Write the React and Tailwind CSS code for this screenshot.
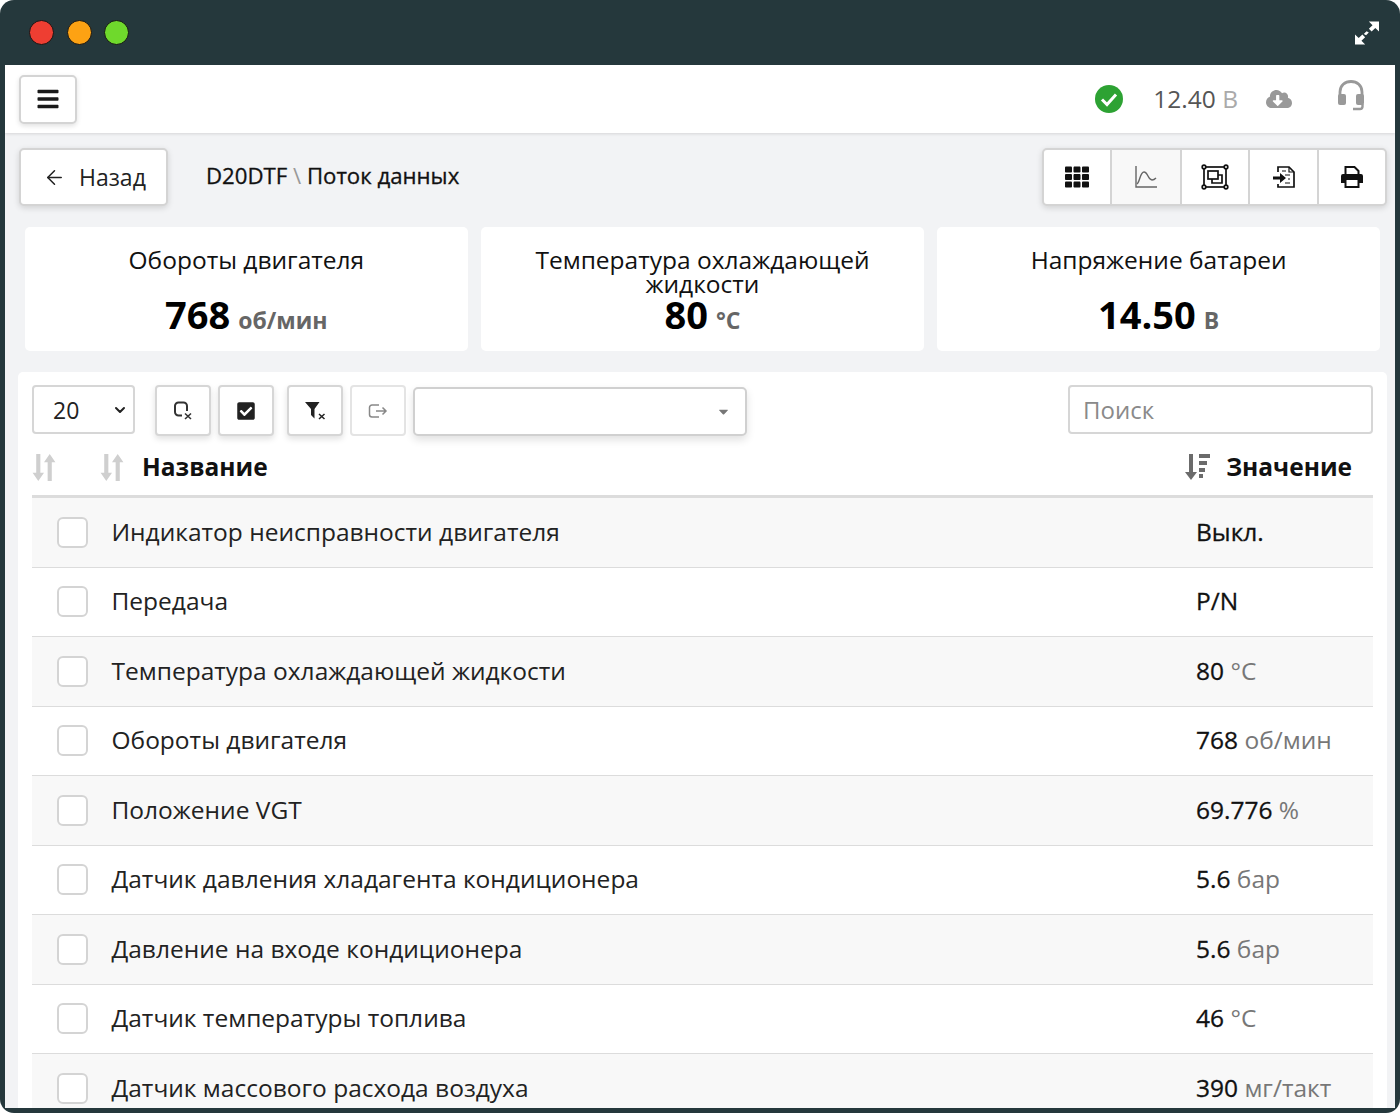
import { FaBars, FaTh, FaCloudDownloadAlt, FaCheckSquare, FaCaretDown } from "react-icons/fa";
import { ArrowLeft, ChevronDown } from "lucide-react";

const font = { fontFamily: '"Open Sans", "Noto Sans", sans-serif' };

const stats = [
  { title: "Обороты двигателя", value: "768", unit: "об/мин" },
  { title: "Температура охлаждающей жидкости", value: "80", unit: "°C", wrapped: true },
  { title: "Напряжение батареи", value: "14.50", unit: "В" },
];

const rows = [
  { name: "Индикатор неисправности двигателя", value: "Выкл." },
  { name: "Передача", value: "P/N" },
  { name: "Температура охлаждающей жидкости", value: "80", unit: "°C" },
  { name: "Обороты двигателя", value: "768", unit: "об/мин" },
  { name: "Положение VGT", value: "69.776", unit: "%" },
  { name: "Датчик давления хладагента кондиционера", value: "5.6", unit: "бар" },
  { name: "Давление на входе кондиционера", value: "5.6", unit: "бар" },
  { name: "Датчик температуры топлива", value: "46", unit: "°C" },
  { name: "Датчик массового расхода воздуха", value: "390", unit: "мг/такт" },
];

function ExpandIcon() {
  return (
    <svg width="24" height="24" viewBox="0 0 26 25" fill="#fff">
      <path d="M15 0h11v11l-4-4-4 4-3-3 4-4z" />
      <path d="M0 25V14l4 4 4-4 3 3-4 4 4 4z" />
      <path d="M9.500 13.500l3-3 2.500 1.500-3 3z" />
    </svg>
  );
}

function ChartIcon() {
  return (
    <svg width="24" height="24" viewBox="0 0 24 24" fill="none" stroke="#666" strokeWidth="1.4">
      <path d="M2 1v21h21" />
      <path d="M3 19c3-2 3-12 7-12 4 0 4 8 8 8 2 0 3-1 4-2" />
    </svg>
  );
}

function SelectionIcon() {
  return (
    <svg width="28" height="26" viewBox="0 0 28 26" fill="none" stroke="#111" strokeWidth="1.7">
      <rect x="3" y="3" width="22" height="20" />
      <rect x="7" y="7" width="10" height="8" fill="#fff" />
      <path d="M17 11h4v8H11v-4" />
      <circle cx="3" cy="3" r="1.8" fill="#fff" />
      <circle cx="25" cy="3" r="1.8" fill="#fff" />
      <circle cx="3" cy="23" r="1.8" fill="#fff" />
      <circle cx="25" cy="23" r="1.8" fill="#fff" />
    </svg>
  );
}

function FileImportIcon() {
  return (
    <svg width="24" height="24" viewBox="0 0 24 24" fill="none" stroke="#111" strokeWidth="1.7">
      <path d="M6 7V2h11l5 5v15H6v-3" />
      <path d="M17 2v5h5" strokeWidth="1.2" />
      <path d="M10 6h4M13 10h5M16 14h2M13 18h5" strokeWidth="1" />
      <path d="M1 11.500h7V8l6 5-6 5v-3.500H1z" fill="#111" stroke="none" />
    </svg>
  );
}

function PrintIcon() {
  return (
    <svg width="24" height="24" viewBox="0 0 24 24" fill="none">
      <path d="M5.500 10V2h9l4 4v4" stroke="#111" strokeWidth="2" />
      <path d="M3 9h18a2 2 0 0 1 2 2v7h-4v-3H5v3H1v-7a2 2 0 0 1 2-2z" fill="#111" />
      <path d="M5.500 15v7h13v-7" stroke="#111" strokeWidth="2" />
    </svg>
  );
}

function HeadsetIcon() {
  return (
    <svg width="28" height="32" viewBox="0 0 28 32" fill="none" stroke="#999">
      <path d="M3 18v-6C3 5.500 8 1.500 14 1.500S25 5.500 25 12v6" strokeWidth="2.800" />
      <rect x="1" y="14" width="8" height="11" rx="2" fill="#999" stroke="none" />
      <rect x="19" y="14" width="8" height="11" rx="2" fill="#999" stroke="none" />
      <path d="M25.500 24v2.500c0 1.500-1 2.500-2.500 2.500h-7" strokeWidth="2.400" />
    </svg>
  );
}

function SortIcon() {
  return (
    <svg width="24" height="27" viewBox="0 0 22 26" fill="#cfcfcf">
      <path d="M3.500 0h4v18H11l-5.500 8L0 18h3.500z" />
      <path d="M14.500 26h4V8H22l-5.500-8L11 8h3.500z" />
    </svg>
  );
}

function SortBarsIcon() {
  return (
    <svg width="26" height="26" viewBox="0 0 26 26" fill="#6b6b6b">
      <path d="M5 0h4v18h4l-6 8-6-8h4z" />
      <rect x="15" y="0" width="11" height="4" />
      <rect x="15" y="7" width="8" height="4" />
      <rect x="15" y="14" width="6" height="4" />
      <rect x="15" y="20" width="4" height="4" />
    </svg>
  );
}

function UncheckIcon() {
  return (
    <svg width="20" height="19" viewBox="0 0 20 19" fill="none" stroke="#333" strokeWidth="2">
      <path d="M14 10V5a3.500 3.500 0 0 0-3.500-3.500h-5A3.500 3.500 0 0 0 2 5v6a3.500 3.500 0 0 0 3.500 3.500H9" />
      <path d="M12 12.500l6 5.500M18 12.500L12 18" strokeWidth="1.600" />
    </svg>
  );
}

function ClearFilterIcon() {
  return (
    <svg width="21" height="18" viewBox="0 0 21 18" fill="none">
      <path d="M0 0h14.500L9.500 7v9.500L6 13V7z" fill="#222" />
      <path d="M14 12l5.500 5M19.500 12L14 17" stroke="#222" strokeWidth="1.500" />
    </svg>
  );
}

function ExitIcon() {
  return (
    <svg width="20" height="16" viewBox="0 0 20 16" fill="none" stroke="#888" strokeWidth="1.500">
      <path d="M11 2H4a2.500 2.500 0 0 0-2.500 2.500v7A2.500 2.500 0 0 0 4 14h7" />
      <path d="M8 8h10M14.500 4.500 18 8l-3.500 3.500" />
    </svg>
  );
}

function ToolButton({ children, className = "" }) {
  return (
    <button className={`flex h-[51px] w-[56px] items-center justify-center rounded-[4px] border-2 border-[#d6d6d6] bg-white ${className}`}>
      {children}
    </button>
  );
}

export default function App() {
  return (
    <div className="h-[1113px] w-[1400px] overflow-hidden bg-white" style={font}>
      <div className="flex h-full flex-col overflow-hidden rounded-[14px] bg-[#25383c] px-[5px] pb-[5px]">
        {/* Window title bar */}
        <div className="flex h-[65px] shrink-0 items-center justify-between pl-[24px] pr-[16px]">
          <div className="mb-[1px] flex gap-[12.500px]">
            <span className="h-[25px] w-[25px] rounded-full border-[1.500px] border-[#151515] bg-[#ee3e32]" />
            <span className="h-[25px] w-[25px] rounded-full border-[1.500px] border-[#151515] bg-[#fda213]" />
            <span className="h-[25px] w-[25px] rounded-full border-[1.500px] border-[#151515] bg-[#6fd92c]" />
          </div>
          <ExpandIcon />
        </div>

        <div className="flex min-h-0 flex-1 flex-col overflow-hidden bg-[#f2f3f5]">
          {/* Top bar */}
          <div className="flex h-[68px] shrink-0 items-center justify-between bg-white pl-[14px] pr-[30px] shadow-[0_1px_3px_rgba(0,0,0,0.12)]">
            <button className="flex h-[49px] w-[58px] items-center justify-center rounded-[5px] border-2 border-[#d4d4d4] bg-white shadow-[0_2px_5px_rgba(0,0,0,0.12)]">
              <FaBars className="text-[24px] text-[#1a1a1a]" />
            </button>
            <div className="flex items-center">
              <svg width="28" height="28" viewBox="0 0 28 28" className="mr-[30px]">
                <circle cx="14" cy="14" r="14" fill="#2da233" />
                <path d="M7 14.500l5 5 9-10" fill="none" stroke="#fff" strokeWidth="3" />
              </svg>
              <span className="mr-[28px] text-[24.500px] text-[#555]">
                12.40 <span className="text-[#aaa]">В</span>
              </span>
              <FaCloudDownloadAlt className="mr-[45px] text-[26px] text-[#999]" />
              <span className="mb-[6px]"><HeadsetIcon /></span>
            </div>
          </div>

          <div className="flex min-h-0 flex-1 flex-col pl-[13px] pr-[8px] pt-[15px]">
            {/* Back and breadcrumb row */}
            <div className="flex h-[58px] shrink-0 items-center justify-between pl-[1px]">
              <div className="flex items-center">
                <button className="flex h-[58px] w-[149px] items-center gap-[13px] rounded-[5px] border-2 border-[#d4d4d4] bg-white pl-[22px] text-[23px] text-[#222] shadow-[0_2px_6px_rgba(0,0,0,0.14)]">
                  <ArrowLeft size={23} strokeWidth={1.600} />
                  Назад
                </button>
                <div className="mb-[2px] ml-[38px] text-[22.200px] font-medium text-[#111] [-webkit-text-stroke:0.3px_#111]">
                  D20DTF <span className="font-normal text-[#999] [-webkit-text-stroke:0]">\</span> Поток данных
                </div>
              </div>
              <div className="flex h-[58px] w-[345px] rounded-[5px] border-2 border-[#d4d4d4] bg-white shadow-[0_2px_6px_rgba(0,0,0,0.14)]">
                <div className="flex w-[68px] items-center justify-center border-r-2 border-[#d4d4d4]"><FaTh className="text-[24px] text-[#111]" /></div>
                <div className="flex w-[70px] items-center justify-center border-r-2 border-[#d4d4d4] bg-[#f8f8f8]"><ChartIcon /></div>
                <div className="flex w-[68px] items-center justify-center border-r-2 border-[#d4d4d4]"><SelectionIcon /></div>
                <div className="flex w-[69px] items-center justify-center border-r-2 border-[#d4d4d4]"><FileImportIcon /></div>
                <div className="flex flex-1 items-center justify-center"><PrintIcon /></div>
              </div>
            </div>

            {/* Stat cards */}
            <div className="mt-[21px] grid h-[124px] shrink-0 grid-cols-3 gap-[13.500px] pl-[7px] pr-[7px]">
              {stats.map((s) => (
                <div key={s.title} className="flex flex-col items-center rounded-[5px] bg-white px-[30px] pt-[21px] text-center">
                  <div className="text-[24.500px] leading-[24px] text-[#111]">{s.title}</div>
                  <div className={`text-[38px] font-bold leading-[36px] text-black ${s.wrapped ? "" : "mt-[24px]"}`}>
                    {s.value}
                    <span className="ml-[8px] text-[23px] text-[#666]">{s.unit}</span>
                  </div>
                </div>
              ))}
            </div>

            {/* Data table */}
            <div className="mt-[21px] min-h-0 flex-1 overflow-hidden rounded-t-[5px] bg-white pl-[14px] pr-[14px] pt-[13px]">
              <div className="flex h-[51px] items-start">
                <div className="flex h-[49px] w-[103px] items-center justify-between rounded-[4px] border-2 border-[#d6d6d6] pl-[19px] pr-[5px] pt-[1px] text-[23px] text-[#222]">
                  20
                  <ChevronDown size={16} strokeWidth={3} className="text-[#222]" />
                </div>
                <ToolButton className="ml-[20px] shadow-[0_3px_6px_rgba(0,0,0,0.12)]"><UncheckIcon /></ToolButton>
                <ToolButton className="ml-[7px] shadow-[0_3px_6px_rgba(0,0,0,0.12)]"><FaCheckSquare className="text-[20px] text-[#222]" /></ToolButton>
                <ToolButton className="ml-[13px] shadow-[0_3px_6px_rgba(0,0,0,0.12)]"><ClearFilterIcon /></ToolButton>
                <ToolButton className="ml-[7px] border-[#e4e4e4]"><ExitIcon /></ToolButton>
                <div className="ml-[7px] mt-[2px] flex h-[49px] w-[334px] items-center justify-end rounded-[5px] border-2 border-[#d0d0d0] bg-white pr-[14px] shadow-[0_4px_8px_rgba(0,0,0,0.12)]">
                  <FaCaretDown className="text-[15px] text-[#777]" />
                </div>
                <div className="ml-auto flex h-[49px] w-[305px] items-center rounded-[4px] border-2 border-[#d6d6d6] pl-[13px] pt-[1px] text-[24px] text-[#8a8a8a]">
                  Поиск
                </div>
              </div>

              {/* Table head */}
              <div className="flex h-[62px] items-center border-b-[3px] border-[#dcdcdc] pt-[3px]">
                <SortIcon />
                <span className="ml-[44px]"><SortIcon /></span>
                <span className="ml-[18px] text-[24.500px] font-bold text-[#111]">Название</span>
                <span className="ml-auto"><SortBarsIcon /></span>
                <span className="ml-[16px] mr-[21px] text-[24.500px] font-bold text-[#111]">Значение</span>
              </div>

              {rows.map((r, i) => (
                <div
                  key={r.name}
                  className={`flex h-[69.500px] items-center border-b border-[#dcdcdc] ${i % 2 === 0 ? "bg-[#f8f8f8]" : "bg-white"}`}
                >
                  <span className="ml-[25px] h-[31px] w-[31px] shrink-0 rounded-[6px] border-2 border-[#d4d4d4] bg-white" />
                  <span className="ml-[23.500px] text-[24.500px] text-[#222]">{r.name}</span>
                  <span className="ml-auto w-[177px] text-[24.500px] text-[#111] [-webkit-text-stroke:0.3px_#111]">
                    {r.value}
                    {r.unit && <span className="text-[#777] [-webkit-text-stroke:0]"> {r.unit}</span>}
                  </span>
                </div>
              ))}
            </div>
          </div>
        </div>
      </div>
    </div>
  );
}
